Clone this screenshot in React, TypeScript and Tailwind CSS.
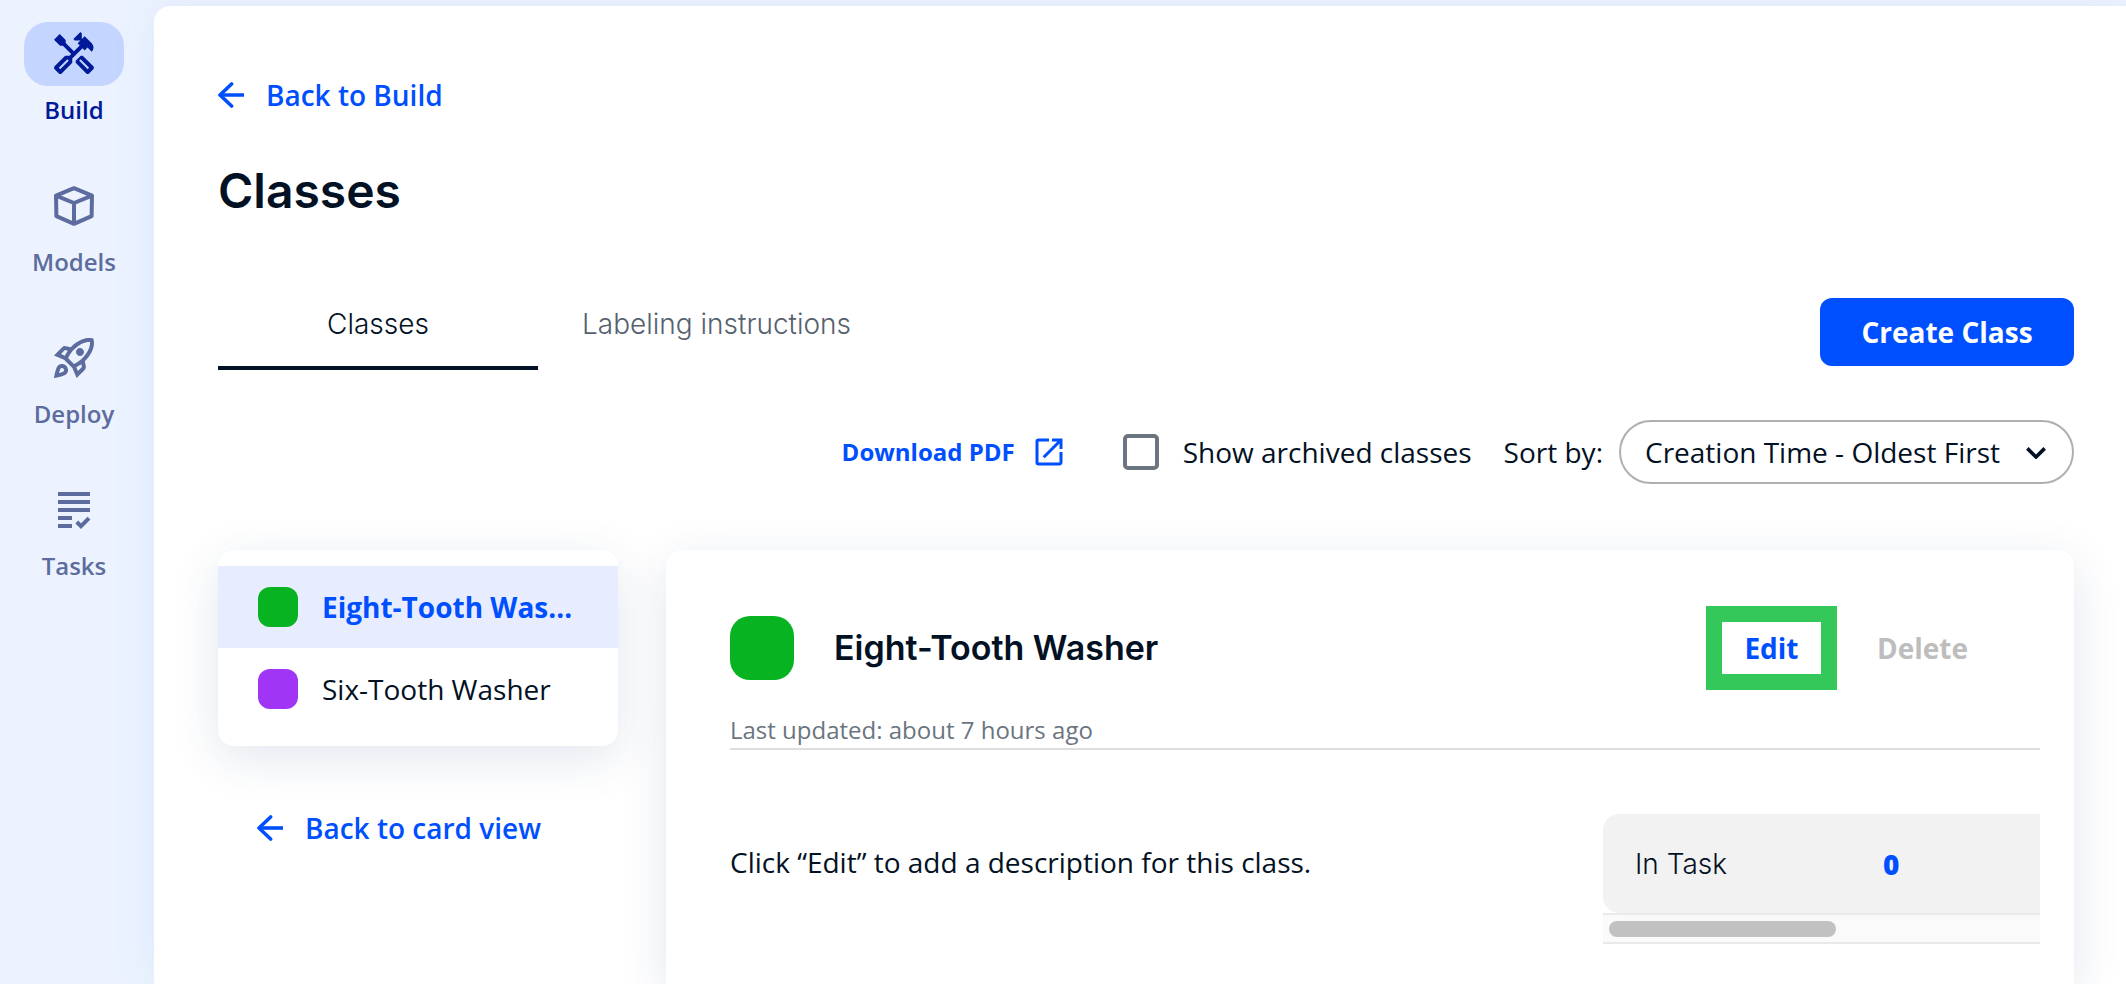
import { useState } from "react";
import type { ReactNode } from "react";
import { MdOutlineHandyman, MdOutlineRocketLaunch, MdOpenInNew } from "react-icons/md";

const BODY = "font-['Open_Sans','Noto_Sans',sans-serif]";
const DISPLAY = "font-['Inter','Open_Sans',sans-serif]";

function CubeIcon() {
  return (
    <svg viewBox="0 0 40 40" className="size-10" fill="none" stroke="currentColor" strokeWidth="4" strokeLinejoin="round" aria-hidden="true">
      <path d="M20 2.2 38 9.6 37.6 30.2 20 37.8 2.4 30.2 2 9.6Z" />
      <path d="M2 9.6 20 17 38 9.6M20 17V37.8" />
    </svg>
  );
}

function TasksIcon() {
  return (
    <svg viewBox="0 0 40 40" className="size-10" fill="none" stroke="currentColor" strokeWidth="4" aria-hidden="true">
      <path d="M4 4H36M4 12H36M4 20H36M4 28H18M4 36H18M22.8 32 27 36.2 35 28.2" />
    </svg>
  );
}

function ArrowLeftIcon() {
  return (
    <svg viewBox="0 0 26 26" className="size-[26px]" fill="none" stroke="currentColor" strokeWidth="3.6" strokeLinecap="round" strokeLinejoin="round" aria-hidden="true">
      <path d="M13.6 2 2 13 13.6 24" />
      <path d="M2.5 13H26" strokeLinecap="butt" />
    </svg>
  );
}

function NavItem({ label, icon, active = false }: { label: string; icon: ReactNode; active?: boolean }) {
  return (
    <a
      href={`#${label.toLowerCase()}`}
      aria-current={active ? "page" : undefined}
      className={`flex flex-col items-center gap-2 ${active ? "text-[#001a99]" : "text-[#5d6c9e]"}`}
    >
      <span className={`flex h-16 w-[100px] items-center justify-center rounded-3xl ${active ? "bg-[#c4d6ff]" : ""}`}>
        {icon}
      </span>
      <span className="text-2xl leading-8 font-semibold">{label}</span>
    </a>
  );
}

const classes = [
  { name: "Eight-Tooth Washer", swatch: "bg-[#08b322]" },
  { name: "Six-Tooth Washer", swatch: "bg-[#a035f5]" },
];

export default function App() {
  const [selected, setSelected] = useState(0);
  const current = classes[selected];

  return (
    <div className={`flex h-screen overflow-hidden bg-[#ecf3ff] text-[28px] leading-10 text-[#031124] ${BODY}`}>
      <nav aria-label="Main" className="flex w-[154px] shrink-0 flex-col gap-12 pt-[22px] pr-[30px] pl-6">
        <NavItem active label="Build" icon={<MdOutlineHandyman className="size-12" />} />
        <NavItem label="Models" icon={<CubeIcon />} />
        <NavItem label="Deploy" icon={<MdOutlineRocketLaunch className="size-12" />} />
        <NavItem label="Tasks" icon={<TasksIcon />} />
      </nav>

      <main className="mt-[6px] flex min-w-0 flex-1 flex-col overflow-hidden rounded-tl-2xl bg-white pt-[69px] pr-[52px] pl-16 shadow-[0_0_48px_rgba(60,100,200,0.08)]">
        <a href="#build" className="flex items-center gap-[22px] self-start font-semibold text-[#004fff]">
          <ArrowLeftIcon />
          Back to Build
        </a>

        <h1 className={`mt-11 text-5xl leading-[64px] font-semibold ${DISPLAY}`}>Classes</h1>

        <div className="mt-[75px] flex items-start justify-between">
          <div role="tablist" className={`flex font-light ${DISPLAY}`}>
            <button type="button" role="tab" aria-selected="true" className="flex h-[72px] w-80 items-start justify-center border-b-4 border-[#031124] pt-[6px]">
              Classes
            </button>
            <button type="button" role="tab" aria-selected="false" className="flex h-[72px] items-start px-11 pt-[6px] text-[#56616e]">
              Labeling instructions
            </button>
          </div>
          <button type="button" className="h-[68px] min-w-[254px] rounded-xl bg-[#004fff] px-10 font-bold text-white">
            Create Class
          </button>
        </div>

        <div className="mt-[50px] flex h-16 items-center justify-end">
          <a href="#pdf" className="flex items-center gap-4 text-2xl font-bold text-[#004fff]">
            Download PDF
            <MdOpenInNew className="size-9" />
          </a>
          <label className="ml-14 flex items-center gap-6">
            <input type="checkbox" className="size-9 appearance-none rounded-[5px] border-4 border-[#6b757f] checked:bg-[#6b757f]" />
            Show archived classes
          </label>
          <label htmlFor="sort" className="ml-8">
            Sort by:
          </label>
          <div className="relative ml-4">
            <select id="sort" className="h-16 w-[455px] appearance-none rounded-full border-2 border-[#afafaf] bg-white pr-16 pl-6">
              <option>Creation Time - Oldest First</option>
              <option>Creation Time - Newest First</option>
            </select>
            <svg viewBox="0 0 20 12" className="pointer-events-none absolute top-[27px] right-7 h-3 w-5" fill="none" stroke="currentColor" strokeWidth="3.6" aria-hidden="true">
              <path d="M1.3 1.4 10 10 18.7 1.4" />
            </svg>
          </div>
        </div>

        <div className="mt-[66px] flex flex-1 gap-12">
          <div className="w-[400px] shrink-0">
            <ul className="rounded-2xl bg-white py-4 shadow-[0_12px_48px_rgba(20,60,110,0.12)]">
              {classes.map((item, index) => (
                <li key={item.name}>
                  <button
                    type="button"
                    onClick={() => setSelected(index)}
                    className={`flex h-[82px] w-full items-center gap-6 pr-11 pl-10 text-left ${
                      index === selected ? "bg-[#e7edff] font-bold text-[#004fff]" : ""
                    }`}
                  >
                    <span className={`size-10 shrink-0 rounded-xl ${item.swatch}`} />
                    <span className="truncate">{item.name}</span>
                  </button>
                </li>
              ))}
            </ul>
            <a href="#cards" className="mt-[62px] ml-[39px] flex items-center gap-[22px] font-semibold text-[#004fff]">
              <ArrowLeftIcon />
              Back to card view
            </a>
          </div>

          <section className="min-w-0 flex-1 rounded-t-2xl bg-white pt-[66px] pr-[34px] pl-16 shadow-[0_12px_48px_rgba(20,50,110,0.12)]">
            <div className="flex h-16 items-center">
              <span className={`size-16 rounded-[20px] ${current.swatch}`} />
              <h2 className={`ml-10 text-[34px] font-semibold ${DISPLAY}`}>{current.name}</h2>
              <button type="button" className="ml-auto h-[52px] w-[99px] bg-white font-bold text-[#004fff] ring-16 ring-[#34c759]">
                Edit
              </button>
              <button type="button" disabled className="mr-8 ml-4 px-10 font-bold text-[#bdbdbd]">
                Delete
              </button>
            </div>
            <p className="mt-[34px] border-b-2 border-[#dedede] pb-[2px] text-2xl leading-8 text-[#6b757f]">
              Last updated: about 7 hours ago
            </p>
            <div className="mt-16 flex items-start justify-between">
              <p className="pt-7">Click “Edit” to add a description for this class.</p>
              <div className="w-[437px] shrink-0">
                <dl className="flex h-[99px] items-center rounded-l-2xl bg-[#f2f2f2] pl-8">
                  <dt className={`w-[248px] font-light ${DISPLAY}`}>In Task</dt>
                  <dd className="font-extrabold text-[#004fff]">0</dd>
                </dl>
                <div className="flex h-[31px] items-center border-y-2 border-[#e9e9e9] bg-[#fafafa] px-[6px]">
                  <div className="h-4 w-[227px] rounded-full bg-[#c1c1c1]" />
                </div>
              </div>
            </div>
          </section>
        </div>
      </main>
    </div>
  );
}
